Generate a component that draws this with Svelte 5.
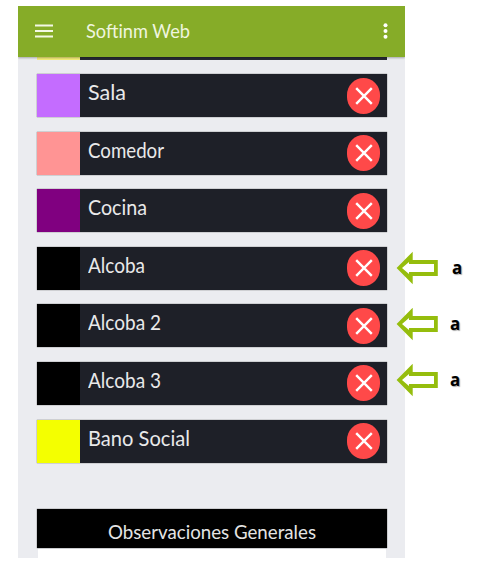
<script lang="ts">
  type Room = { name: string; color: string; width: number };

  const rooms: Room[] = [
    { name: "Sala", color: "#c46cff", width: 38 },
    { name: "Comedor", color: "#ff9494", width: 76 },
    { name: "Cocina", color: "#800080", width: 59 },
    { name: "Alcoba", color: "#000000", width: 57 },
    { name: "Alcoba 2", color: "#000000", width: 73 },
    { name: "Alcoba 3", color: "#000000", width: 73 },
    { name: "Bano Social", color: "#f4ff00", width: 102 },
  ];

  const notes = [{ shift: 2 }, { shift: 0 }, { shift: 0 }];
</script>

<main class="page">
  <section class="phone">
    <header class="toolbar">
      <svg class="menu" width="18" height="14" viewBox="0 0 18 14">
        <path d="M0 1.5h18M0 7h18M0 12.5h18" />
      </svg>
      <svg class="title" width="120" height="26">
        <text x="0" y="18.5" textLength="104" lengthAdjust="spacingAndGlyphs">Softinm Web</text>
      </svg>
      <svg class="more" width="5" height="16" viewBox="0 0 5 16">
        <circle cx="2.5" cy="2.3" r="2" />
        <circle cx="2.5" cy="8" r="2" />
        <circle cx="2.5" cy="13.7" r="2" />
      </svg>
    </header>

    <div class="content">
      <div class="cut"><span></span></div>

      <div class="rooms">
        {#each rooms as room}
          <div class="room">
            <span class="swatch" style="background: {room.color}"></span>
            <svg class="name" width="150" height="36">
              <text x="0" y="26" textLength={room.width} lengthAdjust="spacingAndGlyphs">{room.name}</text>
            </svg>
            <button class="remove" aria-label="Eliminar">
              <svg width="18" height="18" viewBox="0 0 18 18">
                <path d="M1.2 1.2l15.6 15.6M16.8 1.2L1.2 16.8" />
              </svg>
            </button>
          </div>
        {/each}
      </div>

      <div class="observations">
        <svg width="350" height="39">
          <text x="71" y="29.5" textLength="208" lengthAdjust="spacingAndGlyphs">Observaciones Generales</text>
        </svg>
      </div>
      <div class="field"></div>
    </div>
  </section>

  <!-- marks laid over the edge of the phone -->
  <div class="notes">
    {#each notes as note}
      <div class="note">
        <svg class="arrow" width="42" height="34" viewBox="0 0 42 34">
          <path class="edge" d="M0.6 17L16.7 0.7V9H41.8V25H16.7V33.3Z" />
          <path class="inside" d="M6 17L13 11V13H38V21H13V23Z" />
        </svg>
        <span style="margin-left: {note.shift}px">a</span>
      </div>
    {/each}
  </div>
</main>

<style>
:global(body) {
  margin: 0;
  background: #fff;
}

.page {
  position: relative;
  box-sizing: border-box;
  width: 499px;
  height: 570px;
  padding: 6px 0 0 18px;
  overflow: hidden;
  font-family: "Lato", sans-serif;
}

.phone {
  display: flex;
  flex-direction: column;
  width: 387px;
  height: 552px;
  background: #ebecf0;
  overflow: hidden;
}

.toolbar {
  box-sizing: border-box;
  display: flex;
  align-items: center;
  flex: none;
  height: 51px;
  padding: 0 17px;
  background: #86ac28;
  box-shadow: 0 1px 2px rgba(0, 0, 0, 0.3);
  z-index: 1;
}

.menu {
  position: relative;
  top: -1px;
  stroke: #f3f8e5;
  stroke-width: 2;
}

.title {
  margin-left: 33px;
}

.title text {
  font-size: 18.5px;
  fill: #eff5df;
}

.more {
  position: relative;
  top: -1px;
  margin-left: auto;
  fill: #fff;
}

.content {
  display: flex;
  flex-direction: column;
  flex: 1;
  padding: 0 18px 0 19px;
}

.cut {
  height: 3px;
  margin-bottom: 14px;
  background: #282a34;
}

.cut span {
  display: block;
  width: 43px;
  height: 3px;
  background: #f5ee7b;
}

.rooms {
  display: flex;
  flex-direction: column;
  gap: 14.6px;
}

.room {
  box-sizing: border-box;
  display: flex;
  align-items: center;
  height: 43px;
  padding-right: 7px;
  background: #1e2028;
  box-shadow: 0 0 1px #444;
}

.swatch {
  width: 43px;
  height: 43px;
}

.name {
  align-self: flex-start;
  margin-left: 7.5px;
}

.name text {
  font-size: 20.5px;
  fill: #e9e9ea;
}

.remove {
  display: flex;
  align-items: center;
  justify-content: center;
  width: 33px;
  height: 36px;
  margin-left: auto;
  padding: 0;
  border: 0;
  border-radius: 50% / 47%;
  background: #ff4949;
}

.remove path {
  stroke: #fff;
  stroke-width: 2.4;
}

.observations {
  height: 39px;
  margin-top: 46px;
  background: #000;
  box-shadow: 0 0 1px #333;
}

.observations svg {
  display: block;
}

.observations text {
  font-size: 18.5px;
  fill: #e4e4e4;
}

.field {
  flex: 1;
  margin: 1px 1px 0;
  background: #fff;
}

.notes {
  position: absolute;
  top: 251px;
  left: 396px;
  display: flex;
  flex-direction: column;
  gap: 22px;
}

.note {
  display: flex;
  align-items: center;
  gap: 12px;
  height: 34px;
}

.edge {
  fill: #95bd0d;
}

.inside {
  fill: #fff;
}

.note span {
  font: bold 17px/20px "Noto Sans", sans-serif;
  color: #000;
  text-shadow: 1px 1px 1px rgba(0, 0, 0, 0.35);
}
</style>
